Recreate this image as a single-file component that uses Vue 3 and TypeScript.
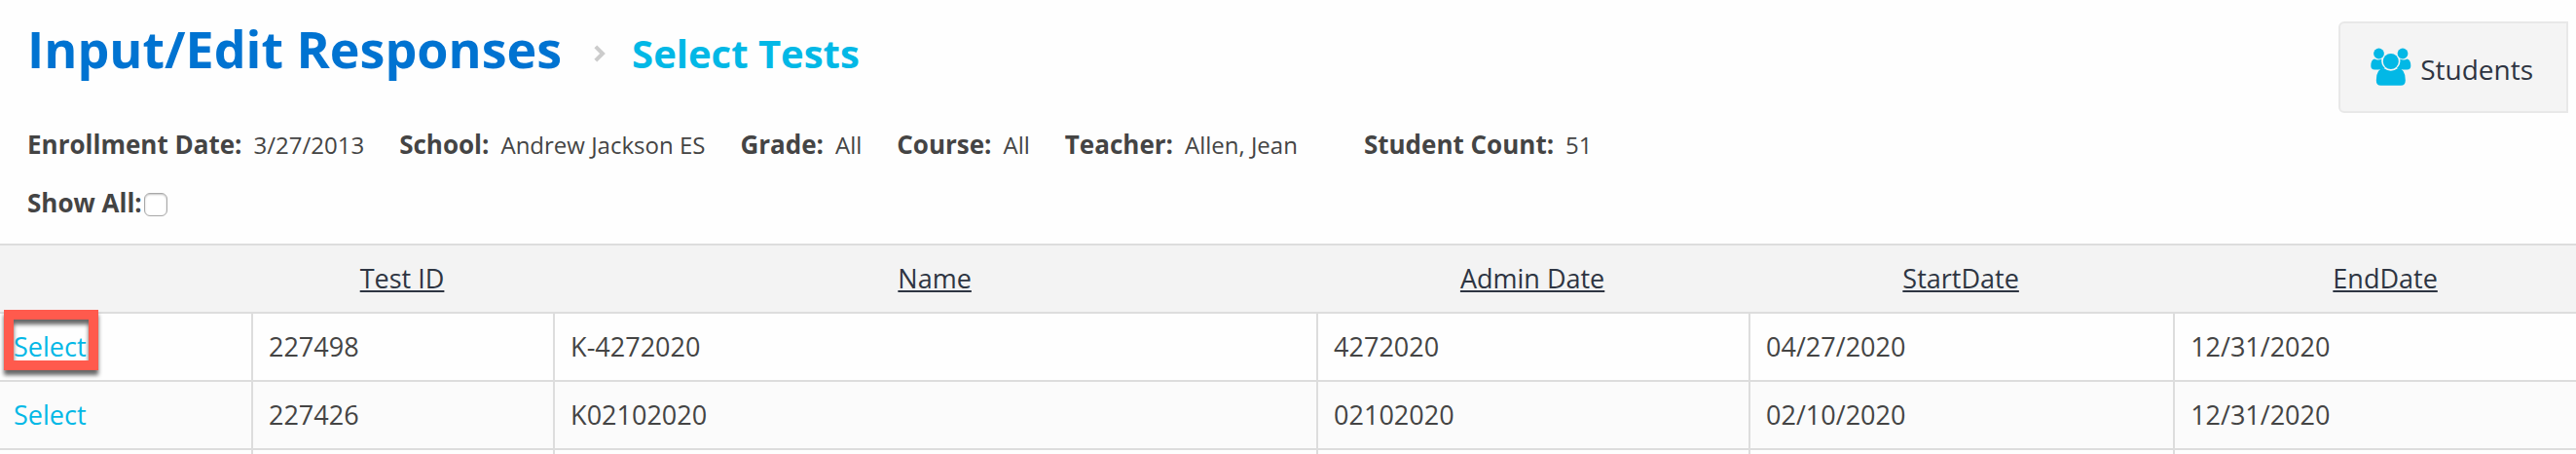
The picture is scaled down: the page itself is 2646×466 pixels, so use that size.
<script setup lang="ts">
import { ref } from 'vue'

interface Detail {
  label: string
  value: string
  spaced?: boolean
}

interface TestRow {
  id: string
  name: string
  admin: string
  start: string
  end: string
  highlighted?: boolean
}

const details: Detail[] = [
  { label: 'Enrollment Date:', value: '3/27/2013' },
  { label: 'School:', value: 'Andrew Jackson ES' },
  { label: 'Grade:', value: 'All' },
  { label: 'Course:', value: 'All' },
  { label: 'Teacher:', value: 'Allen, Jean' },
  { label: 'Student Count:', value: '51', spaced: true },
]

const columns: string[] = ['Test ID', 'Name', 'Admin Date', 'StartDate', 'EndDate']

const tests: TestRow[] = [
  { id: '227498', name: 'K-4272020', admin: '4272020', start: '04/27/2020', end: '12/31/2020', highlighted: true },
  { id: '227426', name: 'K02102020', admin: '02102020', start: '02/10/2020', end: '12/31/2020' },
]

const showAll = ref(false)
</script>

<template>
  <main class="page">
    <header class="top">
      <div class="crumbs">
        <h1 class="title">Input/Edit Responses</h1>
        <svg class="chevron" viewBox="0 0 12 18" aria-hidden="true">
          <path d="M1.8 1.8L9 9L1.8 16.2" fill="none" stroke="#cccccc" stroke-width="4" />
        </svg>
        <h2 class="subtitle">Select Tests</h2>
      </div>
      <button type="button" class="students">
        <svg class="people" viewBox="0 0 42 40" aria-hidden="true">
          <g fill="#02b8e6">
            <circle cx="8.5" cy="6" r="5.4" />
            <circle cx="33" cy="6" r="5.4" />
            <circle cx="20.8" cy="14" r="8" />
            <path d="M4 11.4Q7.6 13.6 11.3 11.6A10 10 0 0 0 14.6 20.8Q12.4 22.4 8 22.4H4.2Q.3 22.4.3 18.8Q.3 12 4 11.4Z" />
            <path d="M37.6 11.4Q34 13.6 30.3 11.6A10 10 0 0 1 27 20.8Q29.2 22.4 33.6 22.4H37.4Q41.3 22.4 41.3 18.8Q41.3 12 37.6 11.4Z" />
            <path d="M13.5 21Q20.8 26.4 28.1 21Q35.8 21.4 35.8 33.5Q35.8 38.8 31 38.8H10.6Q5.8 38.8 5.8 33.5Q5.8 21.4 13.5 21Z" />
          </g>
        </svg>
        <span>Students</span>
      </button>
    </header>

    <dl class="details">
      <div v-for="d in details" :key="d.label" class="detail" :class="{ spaced: d.spaced }">
        <dt>{{ d.label }}</dt>
        <dd>{{ d.value }}</dd>
      </div>
    </dl>

    <div class="show-all">
      <label for="show-all">Show All:</label>
      <input id="show-all" v-model="showAll" type="checkbox" />
    </div>

    <table class="tests">
      <colgroup>
        <col class="c-select" />
        <col class="c-id" />
        <col class="c-name" />
        <col class="c-admin" />
        <col class="c-start" />
        <col class="c-end" />
      </colgroup>
      <thead>
        <tr>
          <td></td>
          <th v-for="c in columns" :key="c" scope="col"><a href="#">{{ c }}</a></th>
        </tr>
      </thead>
      <tbody>
        <tr v-for="t in tests" :key="t.id">
          <td>
            <div class="pick">
              <a href="#">Select</a>
              <span v-if="t.highlighted" class="marker"></span>
            </div>
          </td>
          <td>{{ t.id }}</td>
          <td>{{ t.name }}</td>
          <td>{{ t.admin }}</td>
          <td>{{ t.start }}</td>
          <td>{{ t.end }}</td>
        </tr>
        <tr class="next" aria-hidden="true">
          <td v-for="n in 6" :key="n"></td>
        </tr>
      </tbody>
    </table>
  </main>
</template>

<style>
body {
  background: #fefefe;
}
</style>

<style scoped>
.page {
  font-family: 'Open Sans', 'Noto Sans', sans-serif;
  color: #444444;
  background: #fefefe;
}

.top {
  display: flex;
  justify-content: space-between;
  align-items: flex-start;
  padding: 22px 8px 0 28px;
}

.crumbs {
  display: flex;
  align-items: baseline;
}

.title,
.subtitle {
  margin: 0;
  font-weight: 700;
  line-height: 56px;
}

.title {
  font-size: 52px;
  color: #0073d1;
}

.chevron {
  align-self: center;
  width: 12px;
  height: 18px;
  margin: 4px 27px 0 33px;
}

.subtitle {
  font-size: 40px;
  color: #02b8e6;
}

.students {
  display: flex;
  align-items: center;
  gap: 9px;
  height: 94px;
  padding: 4px 34px 0 31px;
  border: 2px solid #e8e8e8;
  border-radius: 6px 0 0 6px;
  background: #f4f4f4;
  font: inherit;
  font-size: 28px;
  line-height: 36px;
  color: #2e3542;
}

.people {
  width: 42px;
  height: 40px;
  margin-bottom: 4px;
}

.details {
  display: flex;
  align-items: baseline;
  gap: 36px;
  margin: 13px 28px 0;
  line-height: 38px;
}

.detail {
  display: flex;
  align-items: baseline;
  gap: 12px;
}

.spaced {
  margin-left: 32px;
}

dt,
.show-all {
  font-size: 26px;
  font-weight: 700;
}

dd {
  margin: 0;
  font-size: 24px;
}

.show-all {
  display: flex;
  align-items: center;
  gap: 2px;
  margin: 21px 28px 0;
  line-height: 38px;
}

.show-all input {
  appearance: none;
  width: 24px;
  height: 24px;
  margin: 4px 0 0;
  border: 1px solid #a8a8a8;
  border-radius: 6px;
  background: #ffffff;
  box-shadow: inset 0 1px 2px #c4c4c4;
}

.tests {
  width: 100%;
  margin-top: 23px;
  table-layout: fixed;
  border-collapse: separate;
  border-spacing: 0;
  border-top: 2px solid #dddddd;
  font-size: 27px;
  line-height: 36px;
}

.c-select { width: 9.75%; }
.c-id { width: 11.72%; }
.c-name { width: 29.63%; }
.c-admin { width: 16.78%; }
.c-start { width: 16.48%; }
.c-end { width: 15.64%; }

th,
td {
  padding: 16px 14px;
  border-bottom: 2px solid #dddddd;
}

thead {
  background: #f3f3f3;
}

th {
  font-weight: 400;
  text-align: center;
}

th:last-child {
  padding-left: 36px;
}

th a {
  color: #2e3542;
  text-decoration-thickness: 2px;
  text-underline-offset: 2px;
}

tbody td + td {
  padding-left: 16px;
  border-left: 2px solid #dddddd;
}

tbody tr:nth-child(even) {
  background: #fbfbfb;
}

.pick {
  position: relative;
  width: fit-content;
}

.pick a {
  color: #02b8e6;
  text-decoration: none;
}

.marker {
  position: absolute;
  inset: -20px -12px -6px -10px;
  border: 10px solid #ff5a4d;
  pointer-events: none;
  filter: drop-shadow(0 5px 2px rgba(0, 0, 0, 0.6));
}

.next td {
  height: 4px;
  padding-top: 0;
  padding-bottom: 0;
  border-bottom: 0;
}
</style>
